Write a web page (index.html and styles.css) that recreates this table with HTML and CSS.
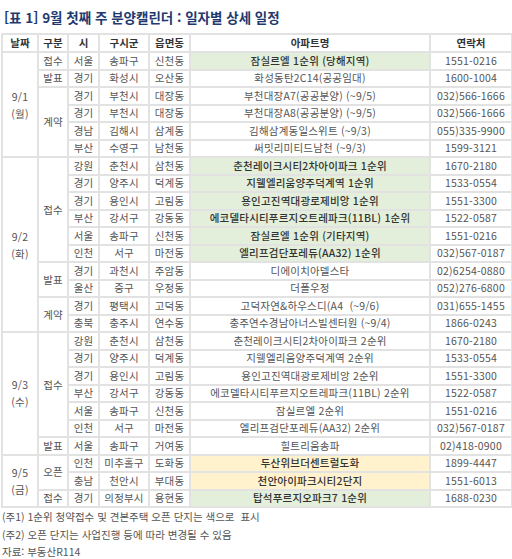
FILE: index.html
```html
<!DOCTYPE html>
<html lang="ko">
<head>
<meta charset="utf-8">
<link rel="stylesheet" href="styles.css">
</head>
<body>
<div class="page">
  <h1 class="title">[표 1] 9월 첫째 주 분양캘린더 : 일자별 상세 일정</h1>
  <table class="cal">
    <colgroup>
      <col class="c-date"><col class="c-type"><col class="c-si"><col class="c-gu"><col class="c-dong"><col class="c-apt"><col class="c-tel">
    </colgroup>
    <thead>
      <tr><th>날짜</th><th>구분</th><th>시</th><th>구시군</th><th>읍면동</th><th>아파트명</th><th>연락처</th></tr>
    </thead>
    <tbody>
      <tr><td rowspan="6" class="date">9/1<br>(월)</td><td>접수</td><td>서울</td><td>송파구</td><td>신천동</td><td class="apt g">잠실르엘 1순위 (당해지역)</td><td>1551-0216</td></tr>
      <tr><td>발표</td><td>경기</td><td>화성시</td><td>오산동</td><td class="apt">화성동탄2C14(공공임대)</td><td>1600-1004</td></tr>
      <tr><td rowspan="4">계약</td><td>경기</td><td>부천시</td><td>대장동</td><td class="apt">부천대장A7(공공분양) (~9/5)</td><td>032)566-1666</td></tr>
      <tr><td>경기</td><td>부천시</td><td>대장동</td><td class="apt">부천대장A8(공공분양) (~9/5)</td><td>032)566-1666</td></tr>
      <tr><td>경남</td><td>김해시</td><td>삼계동</td><td class="apt">김해삼계동일스위트 (~9/3)</td><td>055)335-9900</td></tr>
      <tr><td>부산</td><td>수영구</td><td>남천동</td><td class="apt">써밋리미티드남천 (~9/3)</td><td>1599-3121</td></tr>

      <tr><td rowspan="10" class="date">9/2<br>(화)</td><td rowspan="6">접수</td><td>강원</td><td>춘천시</td><td>삼천동</td><td class="apt g">춘천레이크시티2차아이파크 1순위</td><td>1670-2180</td></tr>
      <tr><td>경기</td><td>양주시</td><td>덕계동</td><td class="apt g">지웰엘리움양주덕계역 1순위</td><td>1533-0554</td></tr>
      <tr><td>경기</td><td>용인시</td><td>고림동</td><td class="apt g">용인고진역대광로제비앙 1순위</td><td>1551-3300</td></tr>
      <tr><td>부산</td><td>강서구</td><td>강동동</td><td class="apt g">에코델타시티푸르지오트레파크(11BL) 1순위</td><td>1522-0587</td></tr>
      <tr><td>서울</td><td>송파구</td><td>신천동</td><td class="apt g">잠실르엘 1순위 (기타지역)</td><td>1551-0216</td></tr>
      <tr><td>인천</td><td>서구</td><td>마전동</td><td class="apt g">엘리프검단포레듀(AA32) 1순위</td><td>032)567-0187</td></tr>
      <tr><td rowspan="2">발표</td><td>경기</td><td>과천시</td><td>주암동</td><td class="apt">디에이치아델스타</td><td>02)6254-0880</td></tr>
      <tr><td>울산</td><td>중구</td><td>우정동</td><td class="apt">더폴우정</td><td>052)276-6800</td></tr>
      <tr><td rowspan="2">계약</td><td>경기</td><td>평택시</td><td>고덕동</td><td class="apt">고덕자연&amp;하우스디(A4 &nbsp;(~9/6)</td><td>031)655-1455</td></tr>
      <tr><td>충북</td><td>충주시</td><td>연수동</td><td class="apt">충주연수경남아너스빌센터원 (~9/4)</td><td>1866-0243</td></tr>

      <tr><td rowspan="7" class="date">9/3<br>(수)</td><td rowspan="6">접수</td><td>강원</td><td>춘천시</td><td>삼천동</td><td class="apt">춘천레이크시티2차아이파크 2순위</td><td>1670-2180</td></tr>
      <tr><td>경기</td><td>양주시</td><td>덕계동</td><td class="apt">지웰엘리움양주덕계역 2순위</td><td>1533-0554</td></tr>
      <tr><td>경기</td><td>용인시</td><td>고림동</td><td class="apt">용인고진역대광로제비앙 2순위</td><td>1551-3300</td></tr>
      <tr><td>부산</td><td>강서구</td><td>강동동</td><td class="apt">에코델타시티푸르지오트레파크(11BL) 2순위</td><td>1522-0587</td></tr>
      <tr><td>서울</td><td>송파구</td><td>신천동</td><td class="apt">잠실르엘 2순위</td><td>1551-0216</td></tr>
      <tr><td>인천</td><td>서구</td><td>마전동</td><td class="apt">엘리프검단포레듀(AA32) 2순위</td><td>032)567-0187</td></tr>
      <tr><td>발표</td><td>서울</td><td>송파구</td><td>거여동</td><td class="apt">힐트리움송파</td><td>02)418-0900</td></tr>

      <tr><td rowspan="3" class="date">9/5<br>(금)</td><td rowspan="2">오픈</td><td>인천</td><td>미추홀구</td><td>도화동</td><td class="apt y">두산위브더센트럴도화</td><td>1899-4447</td></tr>
      <tr><td>충남</td><td>천안시</td><td>부대동</td><td class="apt y">천안아이파크시티2단지</td><td>1551-6013</td></tr>
      <tr><td>접수</td><td>경기</td><td>의정부시</td><td>용현동</td><td class="apt g">탑석푸르지오파크7 1순위</td><td>1688-0230</td></tr>
    </tbody>
  </table>
  <div class="notes">
    <p>(주1) 1순위 청약접수 및 견본주택 오픈 단지는 색으로 &nbsp;표시</p>
    <p>(주2) 오픈 단지는 사업진행 등에 따라 변경될 수 있음</p>
    <p>자료: 부동산R114</p>
  </div>
</div>
</body>
</html>
```

FILE: styles.css
```css
* { box-sizing: border-box; }
html, body { margin: 0; padding: 0; background: #fff; }
body {
  font-family: "Noto Sans CJK KR", "Noto Sans", "Liberation Sans", sans-serif;
  color: #555;
}
.page { padding: 8px 1px 0 1px; width: 512px; }
.title {
  margin: 0 0 7px 3px;
  font-size: 13.5px;
  line-height: 18px;
  font-weight: bold;
  color: #1f3a70;
}
.cal {
  border-collapse: collapse;
  width: 510px;
  table-layout: fixed;
  font-size: 10.5px;
}
.c-date { width: 36px; }
.c-type { width: 30px; }
.c-si { width: 31px; }
.c-gu { width: 50px; }
.c-dong { width: 41px; }
.c-apt { width: 240px; }
.c-tel { width: 82px; }
.cal th, .cal td {
  border: 2px solid #e2e2e2;
  padding: 0;
  height: 17.5px;
  line-height: 14px;
  text-align: center;
  white-space: nowrap;
  overflow: hidden;
}
.cal th { height: 18px; color: #333; font-weight: bold; }
.cal td { color: #555; letter-spacing: 0.2px; }
.cal td.date { line-height: 17px; }
.cal td.apt { color: #555; }
.cal td.g { background: #e3efda; color: #333; font-weight: 500; }
.cal td.y { background: #fff2cc; color: #333; font-weight: 500; }
.notes { padding: 0 0 0 1px; }
.notes p {
  margin: 0;
  font-size: 10.5px;
  line-height: 17.5px;
  color: #555;
}
```
